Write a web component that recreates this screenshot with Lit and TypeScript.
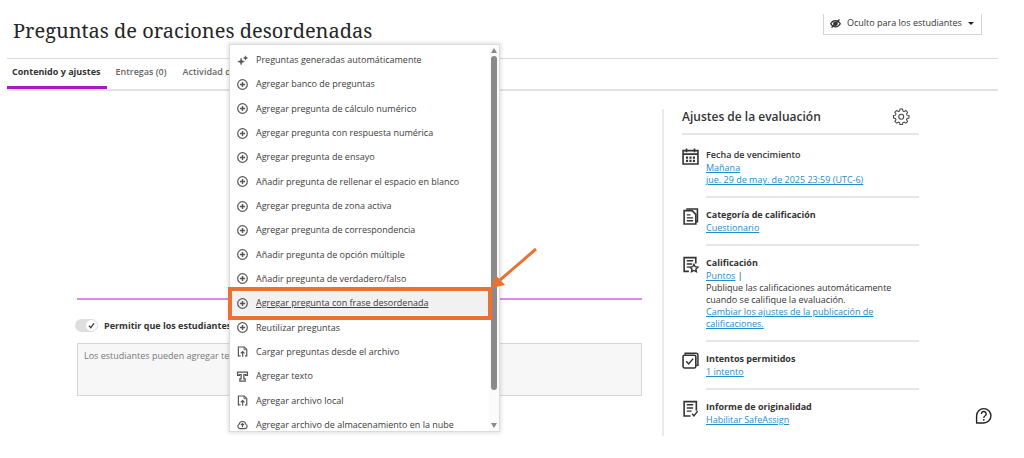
import { LitElement, html, css, svg, nothing } from "lit";
import { customElement, property } from "lit/decorators.js";
import { classMap } from "lit/directives/class-map.js";

const glyphs: Record<string, unknown> = {
  sparkle: svg`<path fill="currentColor" stroke-width=".6" d="M6 4.500 7.400 8.200 11 9.600 7.400 11 6 14.600 4.600 11 1 9.600 4.600 8.200ZM12.400 1l1 2.300 2.300 1-2.300 1-1 2.300-1-2.300-2.300-1 2.300-1Z"/>`,
  plus: svg`<circle cx="8" cy="8" r="7"/><path d="M8 4.200v7.600M4.200 8h7.600" stroke-width="2"/>`,
  upload: svg`<path d="M5.2 14.4H2V1.400h8.600l3.600 3.600v9.400h-2.600M8.2 15.500V8.400M5.400 10.800l2.800-2.800 2.800 2.800" stroke-width="1.700"/><path d="M10.200 1.800v3.600h3.600" stroke-width="1.200"/>`,
  text: svg`<path d="M.8 1.500h14.400v5h-2.600V5.100H10v6.200h1.900v3.300H4.100v-3.300H6V5.100H3.400v1.400H.8Z" stroke-width="1.800"/>`,
  cloud: svg`<path d="M4.400 14a3.400 3.400 0 0 1-1.200-6.500 4.900 4.900 0 0 1 9.600 0 3.400 3.400 0 0 1-1.200 6.500ZM8 12V6.600M5.700 8.800 8 6.500l2.300 2.300" stroke-width="1.600"/>`,
  hidden: svg`<path d="M1 8.400C3 5 5.400 3.900 8 3.900s5 1.100 7 4.500c-2 3.300-4.400 4.400-7 4.400S3 11.700 1 8.400Z" stroke-width="1.900"/><circle cx="8" cy="8.300" r="2.500" fill="currentColor"/><path d="M2.300 14 13.700 2.300" stroke-width="2"/>`,
  gear: svg`<path d="M13.500 2h5l.7 3.800 2.500 1.100 3.200-2.200 3.500 3.500-2.200 3.200 1.100 2.500 3.700.700v5l-3.700.700-1.100 2.500 2.200 3.200-3.500 3.500-3.200-2.200-2.500 1.100-.700 3.700h-5l-.700-3.700-2.500-1.100-3.200 2.200-3.500-3.500 2.200-3.200-1.100-2.500L1 19.600v-5l3.700-.7 1.100-2.500-2.200-3.200 3.500-3.500 3.200 2.200 2.500-1.100Z"/><circle cx="16" cy="17" r="4.800"/>`,
  calendar: svg`<path d="M2 5h28v25H2ZM2 11.500h28" stroke-width="3"/><path d="M8.500 1v7M23.500 1v7" stroke-width="3"/><path d="M7.500 18h4M14 18h4M20.500 18h4M7.500 24.300h4M14 24.300h4M20.500 24.300h4" stroke-width="4"/>`,
  papers: svg`<path d="M8 2h21v24h-3" stroke-width="3"/><path d="M4 5h15l7 7v18H4Z" stroke-width="3"/><path d="M9 13h7M9 18.500h12M9 24h12" stroke-width="2.600"/>`,
  grade: svg`<path d="M13 29H4V3h22v11" stroke-width="3"/><path d="M9 9h12M9 15h10M9 21h5" stroke-width="2.600"/><path d="m22.500 15.500 2.300 4.700 5.200.8-3.800 3.600.9 5.200-4.600-2.500-4.600 2.500.9-5.200-3.800-3.600 5.200-.8Z" stroke-width="2.600"/>`,
  attempts: svg`<path d="M6 5V2.500h20.500q3.500 0 3.500 3.500v19h-3" stroke-width="2.800"/><rect x="2" y="6" width="24" height="24" rx="2.500" stroke-width="3"/><path d="m8 17.500 4.500 5L21 12.500" stroke-width="2.800"/>`,
  report: svg`<path d="M16 30H4V3h23v17" stroke-width="3"/><path d="M9 9h12M9 15h12M9 21h9" stroke-width="2.600"/><path d="m19 26 3.500 4 7-9" stroke-width="2.800"/>`,
  help: svg`<path d="M3 30V16.500A13.500 13.500 0 1 1 16.500 30Z" stroke-width="2.600" stroke-linejoin="round"/><path d="M12 13a4.500 4.500 0 1 1 6.700 3.900c-1.700 1-2.200 1.700-2.200 3.600" stroke-width="2.600"/><circle cx="16.500" cy="24.200" r="1.800" fill="currentColor" stroke="none"/>`,
};

@customElement("ui-icon")
class UiIcon extends LitElement {
  @property() name = "plus";
  @property({ type: Number }) grid = 16;
  static styles = css`
    :host { display: block; flex: none; width: 11px; height: 11px; }
    svg { display: block; width: 100%; height: 100%; fill: none; stroke: currentColor; stroke-width: 1.7; overflow: visible; }
    .fine { stroke-width: 2; }
  `;
  render() {
    return html`<svg class=${classMap({ fine: this.grid > 16 })} viewBox="0 0 ${this.grid} ${this.grid}" aria-hidden="true">${glyphs[this.name]}</svg>`;
  }
}

const menuItems: [string, string][] = [
  ["sparkle", "Preguntas generadas automáticamente"],
  ["plus", "Agregar banco de preguntas"],
  ["plus", "Agregar pregunta de cálculo numérico"],
  ["plus", "Agregar pregunta con respuesta numérica"],
  ["plus", "Agregar pregunta de ensayo"],
  ["plus", "Añadir pregunta de rellenar el espacio en blanco"],
  ["plus", "Agregar pregunta de zona activa"],
  ["plus", "Agregar pregunta de correspondencia"],
  ["plus", "Añadir pregunta de opción múltiple"],
  ["plus", "Añadir pregunta de verdadero/falso"],
  ["plus", "Agregar pregunta con frase desordenada"],
  ["plus", "Reutilizar preguntas"],
  ["upload", "Cargar preguntas desde el archivo"],
  ["text", "Agregar texto"],
  ["upload", "Agregar archivo local"],
  ["cloud", "Agregar archivo de almacenamiento en la nube"],
];
const current = 10;

const settings = [
  { icon: "calendar", title: "Fecha de vencimiento", light: true, body: html`<a href="#">Mañana</a><br /><a href="#">jue. 29 de may. de 2025 23:59 (UTC-6)</a>` },
  { icon: "papers", title: "Categoría de calificación", body: html`<a href="#">Cuestionario</a>` },
  { icon: "grade", title: "Calificación", body: html`<a href="#">Puntos</a> |<br />Publique las calificaciones automáticamente cuando se califique la evaluación.<br /><a href="#">Cambiar los ajustes de la publicación de calificaciones.</a>` },
  { icon: "attempts", title: "Intentos permitidos", body: html`<a href="#">1 intento</a>` },
  { icon: "report", title: "Informe de originalidad", body: html`<a href="#">Habilitar SafeAssign</a>` },
];

@customElement("app-root")
class AppRoot extends LitElement {
  static styles = css`
    :host { display: block; position: relative; min-height: 100vh; background: #fff; color: #333; font: 9px/12px "Open Sans", "Noto Sans", sans-serif; }
    * { box-sizing: border-box; }
    button, select, textarea { font: inherit; color: inherit; }
    .page { padding: 0 26px 0 7px; }
    .top { display: flex; justify-content: space-between; align-items: flex-start; height: 59px; padding: 14px 16px 0 6px; border-bottom: 1px solid #dcdcdc; }
    h1 { margin: 0; padding-top: 3px; font: 400 20px/28px "Noto Serif", "DejaVu Serif", serif; color: #262626; }
    .visibility { display: flex; align-items: center; gap: 6px; height: 21px; padding: 0 7px 2px 6px; border: 1px solid #d5d5d5; border-top: 0; }
    .visibility select { appearance: none; border: 0; padding: 0; background: none; }
    .caret { border: 3px solid transparent; border-top-color: #222; border-bottom: 0; }
    nav { display: flex; height: 32px; border-bottom: 2px solid #e2e2e2; }
    nav a { display: flex; align-items: center; height: 30px; margin-right: 8px; padding: 0 0 4px; color: #666; font-weight: 600; text-decoration: none; }
    nav a.active { padding: 3px 7px 4px 5px; border-bottom: 3px solid #a51cc4; color: #333; font-weight: 700; }
    nav a + a { margin-right: 16px; }
    .columns { display: flex; align-items: flex-start; }
    main { flex: 1; min-width: 0; padding: 0 20px 0 70px; }
    .canvas { height: 209px; border-bottom: 2px solid #dc8af0; }
    .allow { display: flex; align-items: center; gap: 6px; height: 43px; padding-top: 8px; margin-left: -2px; font-weight: 700; }
    .switch { position: relative; flex: none; width: 23px; height: 13px; }
    .switch input { appearance: none; display: block; width: 23px; height: 13px; margin: 0; border-radius: 7px; background: #dedede; }
    .switch svg { position: absolute; right: 1px; top: 1px; width: 11px; height: 11px; pointer-events: none; }
    textarea { display: block; width: 100%; height: 53px; padding: 6px; border: 1px solid #d6d6d6; border-radius: 0; background: #f7f7f7; resize: none; outline: 0; }
    textarea::placeholder { color: #777; opacity: 1; }
    aside { width: 336px; margin-top: 18px; padding: 0 79px 0 18px; border-left: 2px solid #ebebeb; }
    .head { display: flex; align-items: center; justify-content: space-between; height: 26px; margin-bottom: 3px; padding: 0 9px 9px 0; border-bottom: 2px solid #e6e6e6; }
    h2 { margin: 0; font-size: 12px; line-height: 16px; font-weight: 600; }
    .head button, .help { padding: 0; border: 0; background: none; color: #444; }
    .big { width: 17px; height: 17px; }
    .setting { display: flex; gap: 7px; }
    .setting .big { margin-top: 10px; }
    .detail { flex: 1; padding: 10px 0; border-bottom: 2px solid #e6e6e6; }
    .setting:last-of-type .detail { border-bottom: 0; }
    h3 { margin: 0; font-size: 9px; line-height: 14px; font-weight: 700; }
    h3.light { font-weight: 600; }
    .detail p { margin: 0; }
    .detail a { color: #1f8dc9; }
    .menu { position: absolute; left: 229px; top: 44px; width: 271px; height: 388px; display: flex; overflow: hidden; border: 1px solid #dcdcdc; background: #fff; box-shadow: 0 0 4px 1px #0002; }
    ul { flex: 1; display: grid; grid-auto-rows: 1fr; height: 389px; margin: 0; padding: 3px 0 0; list-style: none; box-sizing: content-box; }
    li { display: flex; }
    li button { flex: 1; display: flex; align-items: center; gap: 8px; padding: 0 7px; border: 0; background: none; text-align: left; white-space: nowrap; color: #3c3c3c; }
    li ui-icon { color: #555; }
    li .current { background: #f1f1f1; text-decoration: underline; }
    .bar { flex: none; display: flex; flex-direction: column; align-items: center; width: 10px; padding: 3px 0; gap: 3px; background: #fbfbfb; }
    .bar i { border: 3px solid transparent; border-bottom: 5px solid #888; border-top: 0; }
    .bar i.down { margin-top: auto; border-bottom: 0; border-top: 5px solid #888; }
    .thumb { width: 6px; height: 334px; border-radius: 3px; background: #8a8a8a; }
    .mark { position: absolute; left: 228px; top: 287px; width: 264px; height: 33px; border: 4px solid #e97132; pointer-events: none; }
    .arrow { position: absolute; left: 490px; top: 246px; width: 50px; height: 44px; pointer-events: none; }
    .help { position: absolute; right: 32px; top: 407px; color: #222; }
  `;

  render() {
    return html`
      <div class="page">
        <header class="top">
          <h1>Preguntas de oraciones desordenadas</h1>
          <div class="visibility">
            <ui-icon name="hidden"></ui-icon>
            <select aria-label="Visibilidad"><option>Oculto para los estudiantes</option></select>
            <span class="caret"></span>
          </div>
        </header>
        <nav>
          <a class="active" href="#">Contenido y ajustes</a>
          <a href="#">Entregas (0)</a>
          <a href="#">Actividad del estudiante</a>
        </nav>
        <div class="columns">
          <main>
            <div class="canvas"></div>
            <div class="allow">
              <span class="switch">
                <input id="allow" type="checkbox" role="switch" checked />
                <svg viewBox="0 0 11 11"><circle cx="5.500" cy="5.500" r="5.500" fill="#fff" /><path d="m3 5.700 1.800 2L8 3.300" fill="none" stroke="#444" stroke-width="1.400" /></svg>
              </span>
              <label for="allow">Permitir que los estudiantes</label>
            </div>
            <textarea readonly aria-label="Respuesta" placeholder="Los estudiantes pueden agregar texto"></textarea>
          </main>
          <aside>
            <div class="head">
              <h2>Ajustes de la evaluación</h2>
              <button aria-label="Ajustes"><ui-icon class="big" name="gear" grid="33"></ui-icon></button>
            </div>
            ${settings.map((s) => html`
              <section class="setting">
                <ui-icon class="big" name=${s.icon} grid="32"></ui-icon>
                <div class="detail">
                  <h3 class=${s.light ? "light" : nothing}>${s.title}</h3>
                  <p>${s.body}</p>
                </div>
              </section>`)}
          </aside>
        </div>
      </div>
      <div class="menu">
        <ul>
          ${menuItems.map(([icon, label], i) => html`
            <li><button class=${classMap({ current: i === current })}><ui-icon name=${icon}></ui-icon><span>${label}</span></button></li>`)}
        </ul>
        <div class="bar"><i></i><div class="thumb"></div><i class="down"></i></div>
      </div>
      <div class="mark"></div>
      <svg class="arrow" viewBox="0 0 50 44"><path d="M46 3 10 34" stroke="#e97132" stroke-width="3" /><path d="M1 42 6 29.500 15 39Z" fill="#e97132" /></svg>
      <button class="help" aria-label="Ayuda"><ui-icon class="big" name="help" grid="32"></ui-icon></button>
    `;
  }
}
